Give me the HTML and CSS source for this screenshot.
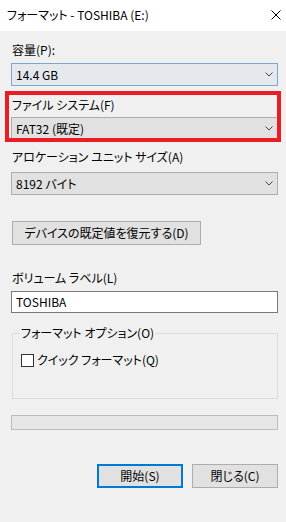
FILE: index.html
```html
<!DOCTYPE html>
<html lang="ja">
<head>
<meta charset="utf-8">
<link rel="stylesheet" href="styles.css">
</head>
<body>
<div class="window">
  <div class="titlebar">
    <span class="title">フォーマット - TOSHIBA (E:)</span>
    <svg class="close" width="10" height="10" viewBox="0 0 10 10"><path d="M0.5 0.5 L9.5 9.5 M9.5 0.5 L0.5 9.5" stroke="#000" stroke-width="1" fill="none"/></svg>
  </div>
  <div class="content">
    <div class="label l-p">容量(P):</div>
    <div class="combo hot c1"><span>14.4 GB</span><svg class="chev" width="8" height="5" viewBox="0 0 8 5"><path d="M0.5 0.5 L4 4 L7.5 0.5" stroke="#444" fill="none"/></svg></div>
    <div class="label l-f">ファイル システム(F)</div>
    <div class="combo c2"><span>FAT32 (既定)</span><svg class="chev" width="8" height="5" viewBox="0 0 8 5"><path d="M0.5 0.5 L4 4 L7.5 0.5" stroke="#444" fill="none"/></svg></div>
    <div class="label l-a">アロケーション ユニット サイズ(A)</div>
    <div class="combo c3"><span>8192 バイト</span><svg class="chev" width="8" height="5" viewBox="0 0 8 5"><path d="M0.5 0.5 L4 4 L7.5 0.5" stroke="#444" fill="none"/></svg></div>
    <div class="btn restore">デバイスの既定値を復元する(D)</div>
    <div class="label l-l">ボリューム ラベル(L)</div>
    <div class="textbox">TOSHIBA</div>
    <fieldset class="group">
      <legend>フォーマット オプション(O)</legend>
      <div class="check-row"><span class="checkbox"></span><span>クイック フォーマット(Q)</span></div>
    </fieldset>
    <div class="progress"></div>
    <div class="actions">
      <div class="btn action default">開始(S)</div>
      <div class="btn action">閉じる(C)</div>
    </div>
  </div>
  <div class="highlight"></div>
</div>
</body>
</html>
```

FILE: styles.css
```css
html, body {
  margin: 0;
  padding: 0;
}
body {
  width: 286px;
  height: 522px;
  background: #f0f0f0;
  font-family: "Noto Sans CJK JP", "Noto Sans", sans-serif;
  font-size: 12px;
  font-feature-settings: "palt";
  color: #000;
  overflow: hidden;
}
.window {
  position: relative;
  width: 286px;
  height: 522px;
}
.titlebar {
  height: 31px;
  background: #fff;
  display: flex;
  align-items: center;
  justify-content: space-between;
  padding: 0 5px 0 7px;
  box-sizing: border-box;
}
.title {
  line-height: 18px;
  margin-top: -1px;
}
.close {
  display: block;
  margin-top: -1px;
}
.content {
  display: flex;
  flex-direction: column;
  padding: 0 8px 0 11px;
}
.label {
  height: 18px;
  line-height: 18px;
  padding-left: 1px;
}
.l-p { margin-top: 10px; }
.l-f { margin-top: 10px; }
.l-a { margin-top: 8px; }
.l-l { margin-top: 24px; }
.combo {
  height: 23px;
  box-sizing: border-box;
  border: 1px solid #adadad;
  background: #e1e1e1;
  display: flex;
  align-items: center;
  justify-content: space-between;
  padding: 0 4px 0 4px;
  line-height: 18px;
}
.combo.hot {
  border-color: #7ea6cf;
  background: #e5e9ee;
}
.c1 { margin-top: 4px; }
.c2 { margin-top: 3px; }
.c3 { margin-top: 6px; }
.chev { display: block; margin-right: 0; }
.btn {
  box-sizing: border-box;
  height: 24px;
  border: 1px solid #adadad;
  background: #e1e1e1;
  display: flex;
  align-items: center;
  justify-content: center;
  line-height: 18px;
}
.restore {
  margin-top: 26px;
  margin-left: 1px;
  width: 189px;
}
.textbox {
  margin-top: 4px;
  height: 22px;
  box-sizing: border-box;
  border: 1px solid #7a7a7a;
  background: #fff;
  line-height: 18px;
  padding: 1px 4px 0;
}
.group {
  margin: 11px 0 0 1px;
  padding: 0 0 0 8px;
  border: 1px solid #dcdcdc;
  height: 75px;
  box-sizing: border-box;
  min-width: 0;
}
.group legend {
  padding: 0 1px;
  margin-left: -1px;
  line-height: 18px;
  height: 18px;
}
.check-row {
  display: flex;
  align-items: center;
  gap: 3px;
  margin-top: 9px;
  line-height: 18px;
}
.checkbox {
  width: 13px;
  height: 13px;
  box-sizing: border-box;
  border: 1px solid #333;
  background: #fff;
}
.progress {
  margin-top: 16px;
  height: 15px;
  box-sizing: border-box;
  border: 1px solid #bcbcbc;
  background: #e6e6e6;
}
.actions {
  margin-top: 34px;
  display: flex;
  justify-content: flex-end;
  gap: 9px;
}
.action {
  width: 86px;
}
.action.default {
  border: 2px solid #0078d7;
}
.highlight {
  position: absolute;
  left: 5px;
  top: 91px;
  width: 276px;
  height: 51px;
  box-sizing: border-box;
  border: 4px solid #ed1c24;
}
```
